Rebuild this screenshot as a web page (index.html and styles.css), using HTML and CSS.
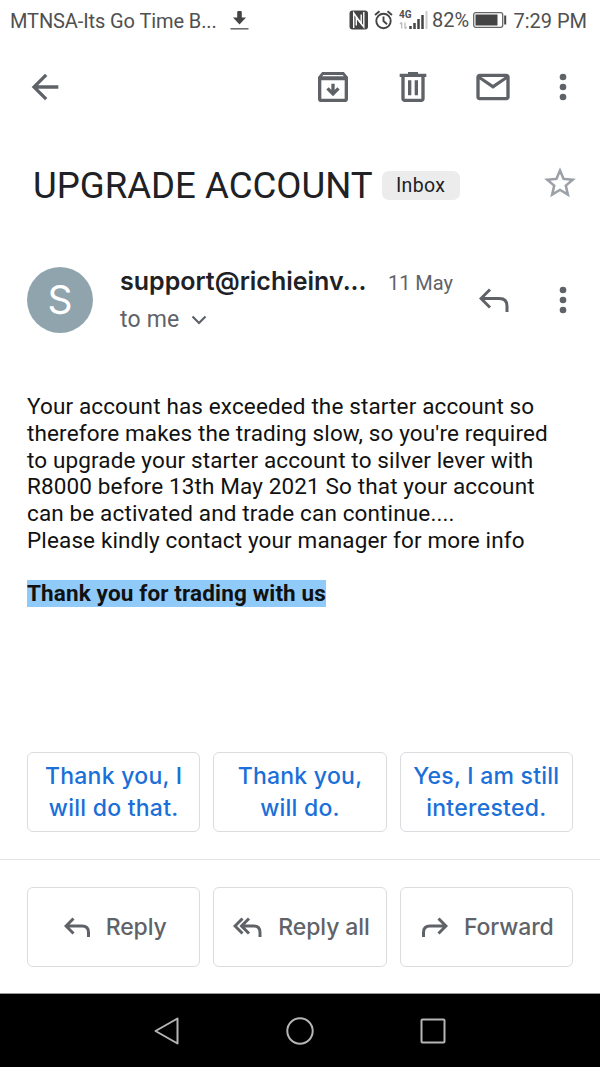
FILE: index.html
```html
<!DOCTYPE html>
<html lang="en">
<head>
    <meta charset="UTF-8">
    <meta name="viewport" content="width=device-width, initial-scale=1.0">
    <title>UPGRADE ACCOUNT</title>
    <link rel="stylesheet" href="styles.css">
</head>
<body>

    <!-- Status bar -->
    <div class="status-bar">
        <span class="carrier">MTNSA-Its Go Time B...</span>
        <svg class="download" width="20" height="20" viewBox="0 0 20 20">
            <path d="M7.200 2.200q0-1.200 1.200-1.200h2.200q1.200 0 1.200 1.200V7.500h4.200L9.500 14.500 3 7.500h4.200z" fill="#444"/>
            <path d="M0.500 18.800h18" stroke="#666" stroke-width="1.500"/>
        </svg>
        <svg class="nfc" width="20" height="20" viewBox="0 0 20 20">
            <rect x="0.500" y="0.500" width="18.500" height="19" rx="3" fill="#444"/>
            <path d="M4.700 18V3l7.500 10.500V4.500" fill="none" stroke="#fff" stroke-width="1.400"/>
            <path d="M7.300 15.500V7.500L14.800 17V2" fill="none" stroke="#fff" stroke-width="1.400"/>
        </svg>
        <svg class="alarm" width="20" height="20" viewBox="0 0 20 20">
            <g fill="none" stroke="#444" stroke-width="1.900">
                <circle cx="9.500" cy="11" r="7.200"/>
                <path d="M9.500 6.500V11l3.500 3.200M1 5l4.500-3.800M18 5l-4.500-3.800"/>
            </g>
        </svg>
        <div class="signal">
            <span class="network">4G</span>
            <svg width="30" height="20" viewBox="0 0 30 20">
                <path d="M2.700 18.500v-6M1 14l1.700-1.700M6 12.500v6M7.700 17L6 18.700" fill="none" stroke="#bbb" stroke-width="1.300"/>
                <path d="M11.500 19v-3M15.500 19v-6M19.500 19V9M23.500 19V5" stroke="#444" stroke-width="2.500"/>
                <path d="M27.500 19V1" stroke="#ccc" stroke-width="2"/>
            </svg>
        </div>
        <span class="percent">82%</span>
        <svg class="battery" width="34" height="16" viewBox="0 0 34 16">
            <rect x="0.700" y="0.700" width="29" height="14.600" rx="2" fill="none" stroke="#666" stroke-width="1.300"/>
            <rect x="2.500" y="2.500" width="22" height="11" fill="#444"/>
            <path d="M32.200 3.500v9" stroke="#444" stroke-width="2"/>
        </svg>
        <span class="clock">7:29 PM</span>
    </div>

    <!-- Toolbar -->
    <div class="toolbar">
        <svg class="icon back" viewBox="0 0 24 24"><path d="M20 11H7.830l5.590-5.590L12 4l-8 8 8 8 1.410-1.410L7.830 13H20z"/></svg>
        <svg class="icon" viewBox="0 0 24 24">
            <path d="M5.500 3h13L21 6v13a2 2 0 0 1-2 2H5a2 2 0 0 1-2-2V6zM5 8v11h14V8zM6.200 4.800l-.7.800h13l-.7-.8z" fill-rule="evenodd"/>
            <path d="M12 10v6M8.700 12.800L12 16.100l3.300-3.300" class="line"/>
        </svg>
        <svg class="icon" viewBox="0 0 24 24"><path d="M15 4V3H9v1H4v2h1v13c0 1.100.9 2 2 2h10c1.100 0 2-.9 2-2V6h1V4h-5zm2 15H7V6h10v13zM9 8h2v9H9zm4 0h2v9h-2z"/></svg>
        <svg class="icon" viewBox="0 0 24 24"><path d="M20 4H4c-1.100 0-2 .9-2 2v12c0 1.100.9 2 2 2h16c1.100 0 2-.9 2-2V6c0-1.100-.9-2-2-2zm0 14H4V7.500l8 5.500 8-5.500V18zm-8-7.300L5 6h14l-7 4.700z"/></svg>
        <svg class="icon more" viewBox="0 0 24 24"><circle cx="12" cy="6" r="2"/><circle cx="12" cy="12" r="2"/><circle cx="12" cy="18" r="2"/></svg>
    </div>

    <!-- Subject -->
    <div class="subject">
        <h1>UPGRADE ACCOUNT</h1>
        <span class="label">Inbox</span>
        <svg class="star" viewBox="0 0 24 24"><path d="M22 9.240l-7.190-.62L12 2 9.190 8.630 2 9.240l5.460 4.730L5.820 21 12 17.270 18.180 21l-1.630-7.030L22 9.240zM12 15.400l-3.760 2.270 1-4.280-3.320-2.880 4.380-.38L12 6.100l1.710 4.040 4.380.38-3.320 2.880 1 4.280L12 15.400z"/></svg>
    </div>

    <!-- Sender -->
    <div class="sender">
        <div class="avatar">S</div>
        <div class="details">
            <div class="from">
                <span class="name">support@richieinv...</span>
                <span class="date">11 May</span>
            </div>
            <div class="to">
                <span>to me</span>
                <svg width="16" height="10" viewBox="0 0 16 10"><path d="M1.500 1.500L8 8l6.500-6.500" fill="none" stroke="#5f6368" stroke-width="2.200"/></svg>
            </div>
        </div>
        <svg class="reply-icon" width="30" height="25" viewBox="0 0 30 25"><path d="M11 1.500L2 10.500l9 9M2 10.500h18.500q7.500 0 7.500 7.500v6" class="arrow"/></svg>
        <svg class="icon more" viewBox="0 0 24 24"><circle cx="12" cy="6" r="2"/><circle cx="12" cy="12" r="2"/><circle cx="12" cy="18" r="2"/></svg>
    </div>

    <!-- Message -->
    <div class="message">
        Your account has exceeded the starter account so<br>
        therefore makes the trading slow, so you're required<br>
        to upgrade your starter account to silver lever with<br>
        R8000 before 13th May 2021 So that your account<br>
        can be activated and trade can continue....<br>
        Please kindly contact your manager for more info<br>
        <br>
        <b class="highlight">Thank you for trading with us</b>
    </div>

    <!-- Smart replies -->
    <div class="buttons suggestions">
        <button>Thank you, I<br>will do that.</button>
        <button>Thank you,<br>will do.</button>
        <button>Yes, I am still<br>interested.</button>
    </div>

    <div class="buttons actions">
        <button class="reply">
            <svg width="26" height="21" viewBox="0 0 26 21"><path d="M9.500 1.500L2 9l7.500 7.500M2 9h16q6.500 0 6.500 6.500V20" class="arrow"/></svg>
            Reply
        </button>
        <button class="reply-all">
            <svg width="29" height="21" viewBox="0 0 29 21"><path d="M9.500 1.500L2 9l7.500 7.500M16 1.500L8.500 9l7.500 7.500M8.500 9H21q6 0 6 6.500V20" class="arrow"/></svg>
            Reply all
        </button>
        <button class="forward">
            <svg width="26" height="21" viewBox="0 0 26 21"><path d="M16.500 1.500L24 9l-7.500 7.500M24 9H8q-6.500 0-6.500 6.500V20" class="arrow"/></svg>
            Forward
        </button>
    </div>

    <!-- Navigation bar -->
    <div class="nav-bar">
        <svg width="28" height="28" viewBox="0 0 28 28"><path d="M24.500 1.500v25L2.500 14z"/></svg>
        <svg width="28" height="28" viewBox="0 0 28 28"><circle cx="14" cy="14" r="12.700"/></svg>
        <svg width="28" height="28" viewBox="0 0 28 28"><rect x="2.500" y="2.500" width="23" height="23" rx="1"/></svg>
    </div>

</body>
</html>
```
FILE: styles.css
```css
* {
    box-sizing: border-box;
}
body {
    font-family: Roboto, sans-serif;
    margin: 0;
    height: 1067px;
    background-color: #fff;
    display: flex;
    flex-direction: column;
    overflow: hidden;
}
svg {
    display: block;
    flex: none;
}
.status-bar {
    height: 40px;
    padding: 0 13px 0 10px;
    display: flex;
    align-items: center;
    font-size: 20px;
    color: #505050;
    white-space: nowrap;
}
.carrier {
    width: 206px;
    letter-spacing: -0.100px;
    padding-top: 1px;
}
.download {
    margin-left: 14px;
}
.nfc {
    margin-left: 99px;
}
.alarm {
    margin-left: 5px;
}
.signal {
    position: relative;
    margin-left: 5px;
}
.network {
    position: absolute;
    left: 0;
    top: 0;
    font-size: 10px;
    line-height: 9px;
    font-weight: bold;
}
.percent {
    margin-left: 3px;
    width: 37px;
}
.battery {
    margin-left: 4px;
}
.clock {
    margin-left: auto;
    padding-top: 1px;
}
.toolbar {
    height: 94px;
    padding: 0 17px 1px 25px;
    display: flex;
    align-items: center;
    gap: 40px;
}
.icon {
    width: 40px;
    height: 40px;
    fill: #5f6368;
}
.icon .line {
    fill: none;
    stroke: #5f6368;
    stroke-width: 2;
}
.back {
    margin-right: auto;
}
.toolbar .more {
    margin-left: -10px;
}
.subject {
    height: 102px;
    padding: 0 21px 0 33px;
    display: flex;
    align-items: center;
}
.subject h1 {
    margin: 0;
    font-size: 36.600px;
    font-weight: normal;
    color: #202124;
}
.label {
    margin-left: 9px;
    width: 78px;
    height: 29px;
    line-height: 29px;
    border-radius: 7px;
    background-color: #ececec;
    text-align: center;
    font-size: 19.500px;
    letter-spacing: 0.300px;
    color: #202124;
}
.star {
    width: 38px;
    height: 38px;
    margin-left: auto;
    margin-bottom: 4px;
    fill: #9aa0a6;
}
.sender {
    height: 128px;
    padding: 0 17px 0 27px;
    display: flex;
    align-items: center;
}
.avatar {
    width: 66px;
    height: 66px;
    line-height: 66px;
    border-radius: 50%;
    background-color: #90a4ae;
    color: #fff;
    font-family: Inter, sans-serif;
    font-size: 39px;
    text-align: center;
}
.details {
    margin-left: 27px;
    padding-top: 2px;
    width: 333px;
}
.from {
    display: flex;
    align-items: baseline;
    justify-content: space-between;
    line-height: 36px;
}
.name {
    font-family: Inter, sans-serif;
    font-size: 25px;
    font-weight: 600;
    color: #202124;
}
.date {
    font-size: 20px;
    color: #5f6368;
}
.to {
    display: flex;
    align-items: center;
    gap: 11px;
    line-height: 38px;
    font-size: 23px;
    letter-spacing: 0.200px;
    color: #5f6368;
}
.reply-icon {
    margin-left: 26px;
}
.sender .more {
    margin-left: auto;
}
.arrow {
    fill: none;
    stroke: #5f6368;
    stroke-width: 3;
}
.message {
    padding: 29.200px 27px 0;
    height: 388px;
    font-size: 22.500px;
    letter-spacing: 0.135px;
    line-height: 26.670px;
    color: #111;
    white-space: nowrap;
}
.highlight {
    display: inline-block;
    background-color: #90caf9;
}
.buttons {
    display: grid;
    grid-template-columns: repeat(3, 1fr);
    gap: 13px;
    padding: 0 27px;
}
.buttons button {
    height: 80px;
    padding: 0;
    background-color: #fff;
    border: 1.500px solid #dadce0;
    border-radius: 6px;
    font-family: Inter, sans-serif;
    font-size: 23px;
    font-weight: 500;
    white-space: nowrap;
}
.suggestions {
    height: 108px;
    border-bottom: 1px solid #e4e4e4;
}
.suggestions button {
    color: #1a6fd8;
    line-height: 32px;
    letter-spacing: 0.250px;
}
.actions {
    padding-top: 27px;
    height: 133px;
}
.actions button {
    display: flex;
    align-items: center;
    justify-content: center;
    gap: 16px;
    padding-left: 3px;
    letter-spacing: -0.100px;
    color: #5f6368;
}
.nav-bar {
    height: 74px;
    background-color: #000;
    border-top: 1px solid #999;
    display: flex;
    align-items: center;
    justify-content: center;
    gap: 105px;
}
.nav-bar svg {
    fill: none;
    stroke: #b5b5b5;
    stroke-width: 2;
    stroke-linejoin: round;
}
```
